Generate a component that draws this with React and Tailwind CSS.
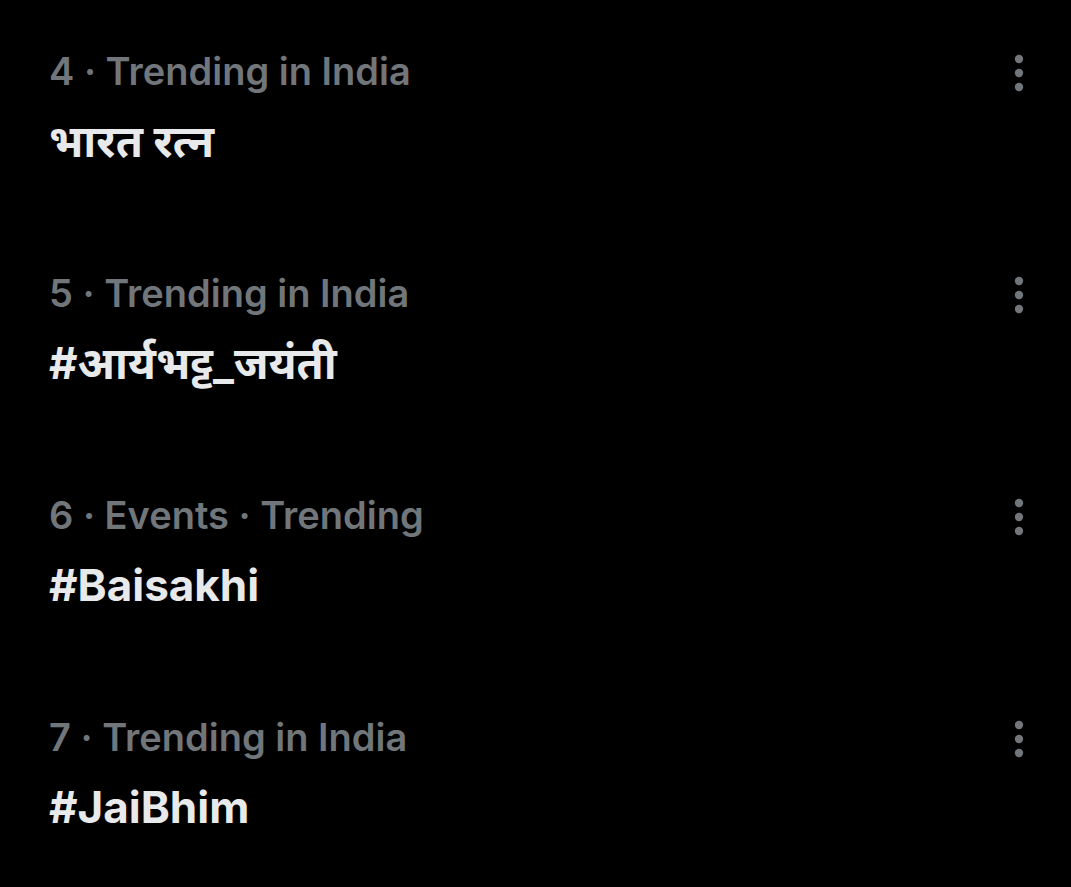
const trends = [
  { id: 4, meta: '4 · Trending in India', title: 'भारत रत्न' },
  { id: 5, meta: '5 · Trending in India', title: '#आर्यभट्ट_जयंती' },
  { id: 6, meta: '6 · Events · Trending', title: '#Baisakhi' },
  { id: 7, meta: '7 · Trending in India', title: '#JaiBhim' },
]

function MoreIcon() {
  return (
    <svg width="10" height="38" viewBox="0 0 10 38" className="text-[#71767b]">
      <circle cx="5" cy="5" r="4.2" fill="currentColor" />
      <circle cx="5" cy="19" r="4.2" fill="currentColor" />
      <circle cx="5" cy="33" r="4.2" fill="currentColor" />
    </svg>
  )
}

export default function App() {
  return (
    <div className="min-h-[887px] w-full bg-black font-['Inter','Noto_Sans',sans-serif]">
      {trends.map((t) => (
        <div key={t.id} className="flex justify-between pl-[49px] pr-[47px] pt-[49px] pb-[56px]">
          <div>
            <p className="text-[38px] leading-[44px] font-semibold text-[#71767b]">{t.meta}</p>
            <p className="mt-[24px] text-[44px] leading-[49px] font-bold text-[#e7e9ea]">{t.title}</p>
          </div>
          <div className="pt-[5px]">
            <MoreIcon />
          </div>
        </div>
      ))}
    </div>
  )
}
